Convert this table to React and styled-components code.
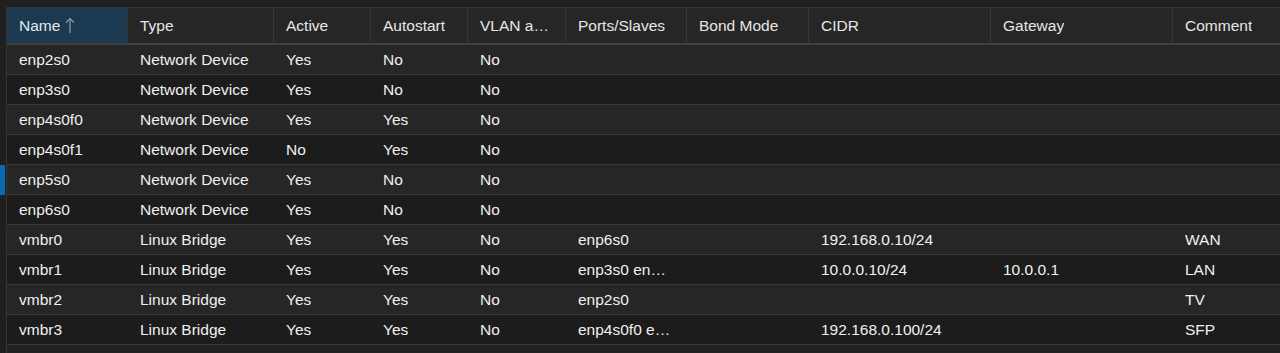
import React from 'react';
import styled, { createGlobalStyle } from 'styled-components';

const GlobalStyle = createGlobalStyle`
  body {
    margin: 0;
    background: #1f1f1f;
    font-family: "Liberation Sans", Arial, sans-serif;
  }
`;

const columns = [
  { key: 'name', label: 'Name', width: 121, sorted: true },
  { key: 'type', label: 'Type', width: 146 },
  { key: 'active', label: 'Active', width: 97 },
  { key: 'autostart', label: 'Autostart', width: 97 },
  { key: 'vlan', label: 'VLAN aware', width: 98 },
  { key: 'ports', label: 'Ports/Slaves', width: 121 },
  { key: 'bond', label: 'Bond Mode', width: 122 },
  { key: 'cidr', label: 'CIDR', width: 182 },
  { key: 'gateway', label: 'Gateway', width: 182 },
  { key: 'comment', label: 'Comment', width: null },
];

const template = columns.map(c => (c.width ? `${c.width}px` : '1fr')).join(' ');

const dev = (name, active, autostart) => ({
  name, type: 'Network Device', active, autostart, vlan: 'No',
});

const rows = [
  dev('enp2s0', 'Yes', 'No'),
  dev('enp3s0', 'Yes', 'No'),
  dev('enp4s0f0', 'Yes', 'Yes'),
  dev('enp4s0f1', 'No', 'Yes'),
  dev('enp5s0', 'Yes', 'No'),
  dev('enp6s0', 'Yes', 'No'),
  { name: 'vmbr0', type: 'Linux Bridge', active: 'Yes', autostart: 'Yes', vlan: 'No', ports: 'enp6s0', cidr: '192.168.0.10/24', comment: 'WAN' },
  { name: 'vmbr1', type: 'Linux Bridge', active: 'Yes', autostart: 'Yes', vlan: 'No', ports: 'enp3s0 enp5s0', cidr: '10.0.0.10/24', gateway: '10.0.0.1', comment: 'LAN' },
  { name: 'vmbr2', type: 'Linux Bridge', active: 'Yes', autostart: 'Yes', vlan: 'No', ports: 'enp2s0', comment: 'TV' },
  { name: 'vmbr3', type: 'Linux Bridge', active: 'Yes', autostart: 'Yes', vlan: 'No', ports: 'enp4s0f0 enp4s0f1', cidr: '192.168.0.100/24', comment: 'SFP' },
];

const Page = styled.div`
  display: flex;
  height: 353px;
  overflow: hidden;
  padding-top: 7px;
  box-sizing: border-box;
`;

const Gutter = styled.div`
  width: 6px;
  flex: none;
  border-right: 1px solid #333333;
  background: #1f1f1f;
  padding-top: 158px;
  box-sizing: content-box;
`;

const Marker = styled.div`
  width: 5px;
  height: 30px;
  background: #0868b0;
`;

const Grid = styled.div`
  flex: 1;
  min-width: 0;
  border-top: 1px solid #343434;
  background: #222222;
`;

const HeaderRow = styled.div`
  display: grid;
  grid-template-columns: ${template};
  height: 35px;
  border-bottom: 2px solid #404040;
  background: #262626;
`;

const HeaderCell = styled.div`
  display: flex;
  align-items: center;
  gap: 5px;
  padding: 0 15px 0 12px;
  min-width: 0;
  box-sizing: border-box;
  border-right: 1px solid #363636;
  background: ${p => (p.$sorted ? '#1b3a52' : 'transparent')};
  color: #e6e6e6;
  font-size: 15.5px;
  &:last-child {
    border-right: none;
  }
`;

const Label = styled.span`
  white-space: nowrap;
  overflow: hidden;
  text-overflow: ellipsis;
`;

const SortArrow = styled.svg`
  flex: none;
  width: 10px;
  height: 17px;
`;

const Row = styled.div`
  display: grid;
  grid-template-columns: ${template};
  height: 29px;
  border-bottom: 1px solid #383838;
  background: ${p => (p.$odd ? '#262626' : '#1c1c1c')};
`;

const Cell = styled.div`
  display: flex;
  align-items: center;
  padding: 0 15px 0 12px;
  min-width: 0;
  box-sizing: border-box;
  color: #f0f0f0;
  font-size: 15.5px;
`;

const CellText = styled.span`
  white-space: nowrap;
  overflow: hidden;
  text-overflow: ellipsis;
`;

export default function App() {
  return (
    <>
      <GlobalStyle />
      <Page>
        <Gutter>
          <Marker />
        </Gutter>
        <Grid>
          <HeaderRow>
            {columns.map(col => (
              <HeaderCell key={col.key} $sorted={col.sorted}>
                <Label>{col.label}</Label>
                {col.sorted && (
                  <SortArrow viewBox="0 0 10 17" fill="none" stroke="#8a98a6" strokeWidth="1.2">
                    <path d="M5 16V1.5M1 5.5L5 1.5L9 5.5" />
                  </SortArrow>
                )}
              </HeaderCell>
            ))}
          </HeaderRow>
          {rows.map((row, i) => (
            <Row key={row.name} $odd={i % 2 === 0}>
              {columns.map(col => (
                <Cell key={col.key}>
                  <CellText>{row[col.key] || ''}</CellText>
                </Cell>
              ))}
            </Row>
          ))}
        </Grid>
      </Page>
    </>
  );
}
